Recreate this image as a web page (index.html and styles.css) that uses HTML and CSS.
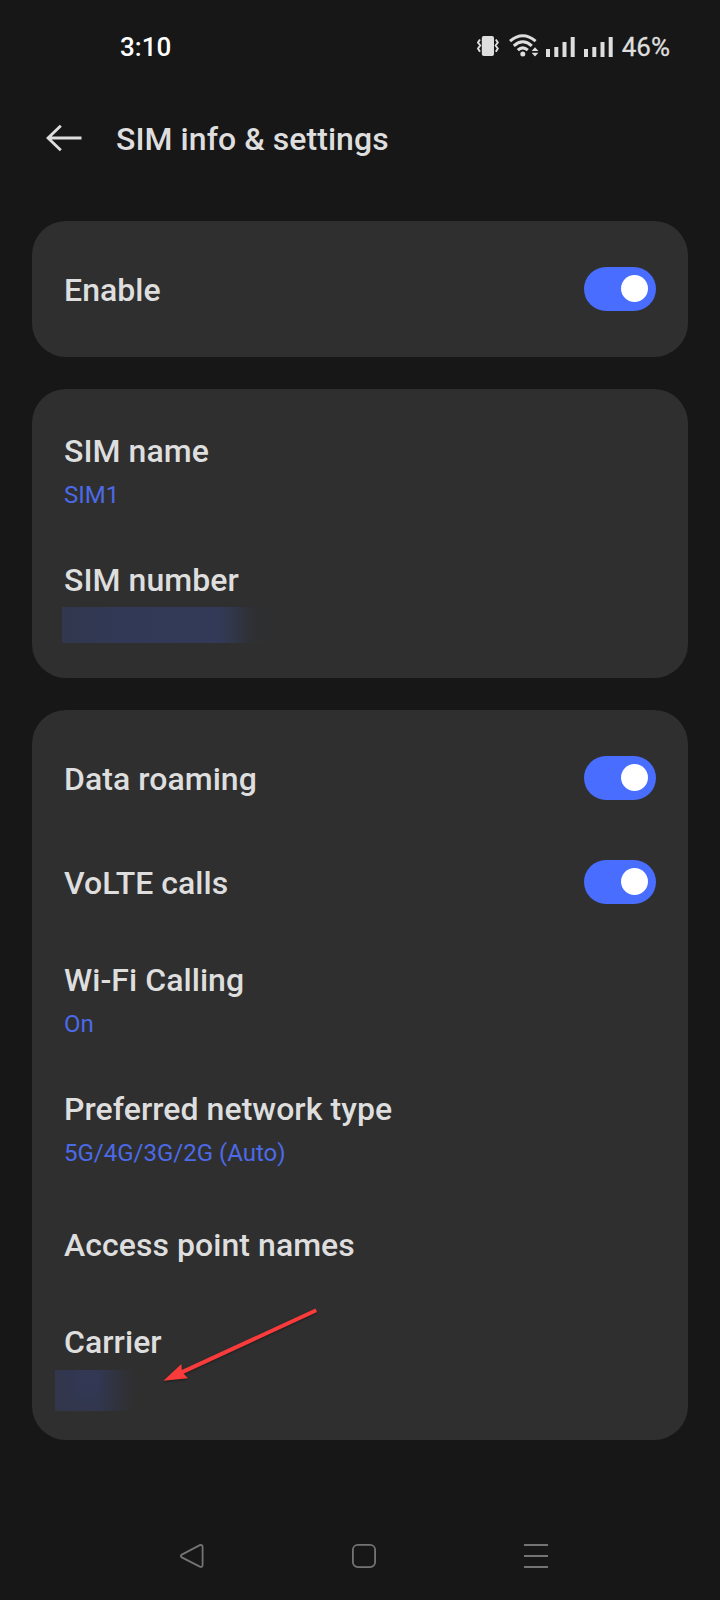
FILE: index.html
```html
<!DOCTYPE html>
<html lang="en">
<head>
<meta charset="utf-8">
<title>SIM info &amp; settings</title>
<link rel="stylesheet" href="styles.css">
</head>
<body>
<div class="screen">
  <div class="status">
    <span class="clock">3:10</span>
    <div class="status-icons">
      <svg class="vibrate" width="22" height="20" viewBox="0 0 22 20" fill="none" stroke="#dedede" stroke-width="1.9">
        <rect x="4.8" y="0" width="12.2" height="20" rx="2" fill="#dedede" stroke="none"/>
        <path d="M3 3.5 1 6.5 3.2 9.5 1 12.5 3 15.8M18.8 3.5 20.8 6.5 18.6 9.5 20.8 12.5 18.8 15.8"/>
      </svg>
      <svg class="wifi" width="30" height="23" viewBox="0 0 30 23" fill="none" stroke="#dedede" stroke-width="3">
        <path d="M1 7.2Q13.8-3.8 26.6 7.2M4.8 11.8Q13.8 3.8 22.8 11.8M8.8 16.2Q13.8 11.4 18.8 16.2"/>
        <circle cx="13.8" cy="20" r="2.5" fill="#dedede" stroke="none"/>
        <path d="M22.6 17 26 13.2 29.4 17zM22.6 18.8 26 22.6 29.4 18.8z" fill="#dedede" stroke="none"/>
      </svg>
      <svg class="signal" width="29" height="20" viewBox="0 0 29 20" fill="#dedede">
        <path d="M0 12h4v8H0zM8.3 10h4v10h-4zM16.5 5h4v15h-4zM24.7 0h4v20h-4z"/>
      </svg>
      <svg class="signal" width="29" height="20" viewBox="0 0 29 20" fill="#dedede">
        <path d="M0 12h4v8H0zM8.3 10h4v10h-4zM16.5 5h4v15h-4zM24.7 0h4v20h-4z"/>
      </svg>
      <span class="battery">46%</span>
    </div>
  </div>

  <header class="header">
    <svg width="36" height="28" viewBox="0 0 36 28" fill="none" stroke="#dedede" stroke-width="2.9">
      <path d="M35.5 14H2M14.8 1.8 2 14 14.8 26.2"/>
    </svg>
    <h1 class="heading">SIM info &amp; settings</h1>
  </header>

  <main class="cards">
    <section class="card power">
      <div class="row single"><span class="title">Enable</span><span class="toggle"><i class="knob"></i></span></div>
    </section>
    <section class="card">
      <div class="row double"><span class="title">SIM name</span><span class="value">SIM1</span></div>
      <div class="row double"><span class="title">SIM number</span><span class="redacted number"></span></div>
    </section>
    <section class="card network">
      <div class="row single"><span class="title">Data roaming</span><span class="toggle"><i class="knob"></i></span></div>
      <div class="row single"><span class="title">VoLTE calls</span><span class="toggle"><i class="knob"></i></span></div>
      <div class="row double"><span class="title">Wi-Fi Calling</span><span class="value">On</span></div>
      <div class="row double"><span class="title">Preferred network type</span><span class="value">5G/4G/3G/2G (Auto)</span></div>
      <div class="row single"><span class="title">Access point names</span></div>
      <div class="row double"><span class="title">Carrier</span><span class="redacted carrier"></span></div>
      <svg class="pointer" width="156" height="76" viewBox="0 0 156 76">
        <path d="M18 64.6 153.3 2.3" stroke="#fa3b3b" stroke-width="4" fill="none"/>
        <path d="M0.4 72.8 18.4 56 19 64 25 70.3z" fill="#fa3b3b"/>
      </svg>
    </section>
  </main>

  <nav class="nav">
    <svg width="24" height="24" viewBox="0 0 24 24" fill="none" stroke="#747474" stroke-width="1.8">
      <path d="M1.8 10.6 19.8 1.2Q22.6 0.4 22.6 3.2V20.8Q22.6 23.6 19.8 22.6L1.8 13.4Q-.2 12 1.8 10.6z"/>
    </svg>
    <svg width="24" height="24" viewBox="0 0 24 24" fill="none" stroke="#747474" stroke-width="1.8">
      <rect x=".9" y=".9" width="22.2" height="22.2" rx="5"/>
    </svg>
    <svg width="24" height="24" viewBox="0 0 24 24" stroke="#747474" stroke-width="2">
      <path d="M0 1H24M0 12H24M0 23H24"/>
    </svg>
  </nav>
</div>
</body>
</html>
```

FILE: styles.css
```css
* { box-sizing: border-box; }

body {
  margin: 0;
  background: #171717;
  color: #dedede;
  font-family: Roboto, "Liberation Sans", sans-serif;
}

.screen {
  width: 720px;
  height: 1600px;
  display: flex;
  flex-direction: column;
}

.status {
  height: 94px;
  padding: 0 50px 0 120px;
  display: flex;
  align-items: center;
  justify-content: space-between;
  font-size: 26px;
  line-height: 30px;
  font-weight: 500;
}

.clock { color: #fff; }

.status-icons { display: flex; align-items: center; }
.vibrate { margin-right: 10px; margin-top: -2px; }
.wifi { margin-right: 7px; margin-top: -3px; }
.signal { margin-right: 9px; margin-top: -1px; }

.battery { font-weight: 400; -webkit-text-stroke: .3px #dedede; }

.header {
  height: 127px;
  padding: 26px 46px 0;
  display: flex;
  align-items: flex-start;
  gap: 34px;
}
.header svg { margin-top: 4px; }

.heading {
  margin: 0;
  font-size: 32px;
  line-height: 38px;
  font-weight: 500;
  letter-spacing: .05px;
}

.cards {
  padding: 0 32px;
  display: flex;
  flex-direction: column;
  gap: 32px;
}

.card {
  position: relative;
  padding: 16px 32px 15px;
  border-radius: 34px;
  background: #2f2f2f;
}
.power { padding-bottom: 16px; }

.row { display: flex; }
.single {
  height: 104px;
  align-items: center;
  justify-content: space-between;
}
.double {
  height: 129px;
  padding-top: 27px;
  flex-direction: column;
  align-items: flex-start;
}

.title {
  font-size: 32px;
  line-height: 38px;
  font-weight: 500;
  letter-spacing: .05px;
}
.single .title { padding-top: 1px; }

.value {
  margin-top: 11px;
  font-size: 24px;
  line-height: 28px;
  color: #4c6ae6;
}

.toggle {
  width: 72px;
  height: 44px;
  padding: 0 8px 1px;
  border-radius: 22px;
  background: #486dff;
  display: flex;
  align-items: center;
  justify-content: flex-end;
}
.knob {
  width: 27px;
  height: 27px;
  border-radius: 50%;
  background: #fff;
}

.redacted { flex: none; }
.number {
  width: 213px;
  height: 36px;
  margin: 8px 0 0 -2px;
  background: linear-gradient(90deg, #31374d 0, #323956 60px, #333a58 155px, #31374b 170px, #2f3033 190px, #2f2f2f 213px);
}
.carrier {
  width: 101px;
  height: 41px;
  margin: 9px 0 0 -9px;
  background:
    linear-gradient(90deg, rgba(47, 47, 47, 0) 42px, #2f2f2f 80px),
    radial-gradient(circle at 36px 10px, #333856 0, #31364a 45px);
}

/* Callout arrow drawn over the carrier row */
.pointer {
  position: absolute;
  left: 131px;
  bottom: 56px;
  filter: drop-shadow(0 1px 1px rgba(0, 0, 0, .4));
}

.nav {
  margin-top: auto;
  height: 88px;
  padding: 0 172px 0 180px;
  display: flex;
  align-items: center;
  justify-content: space-between;
}
```
